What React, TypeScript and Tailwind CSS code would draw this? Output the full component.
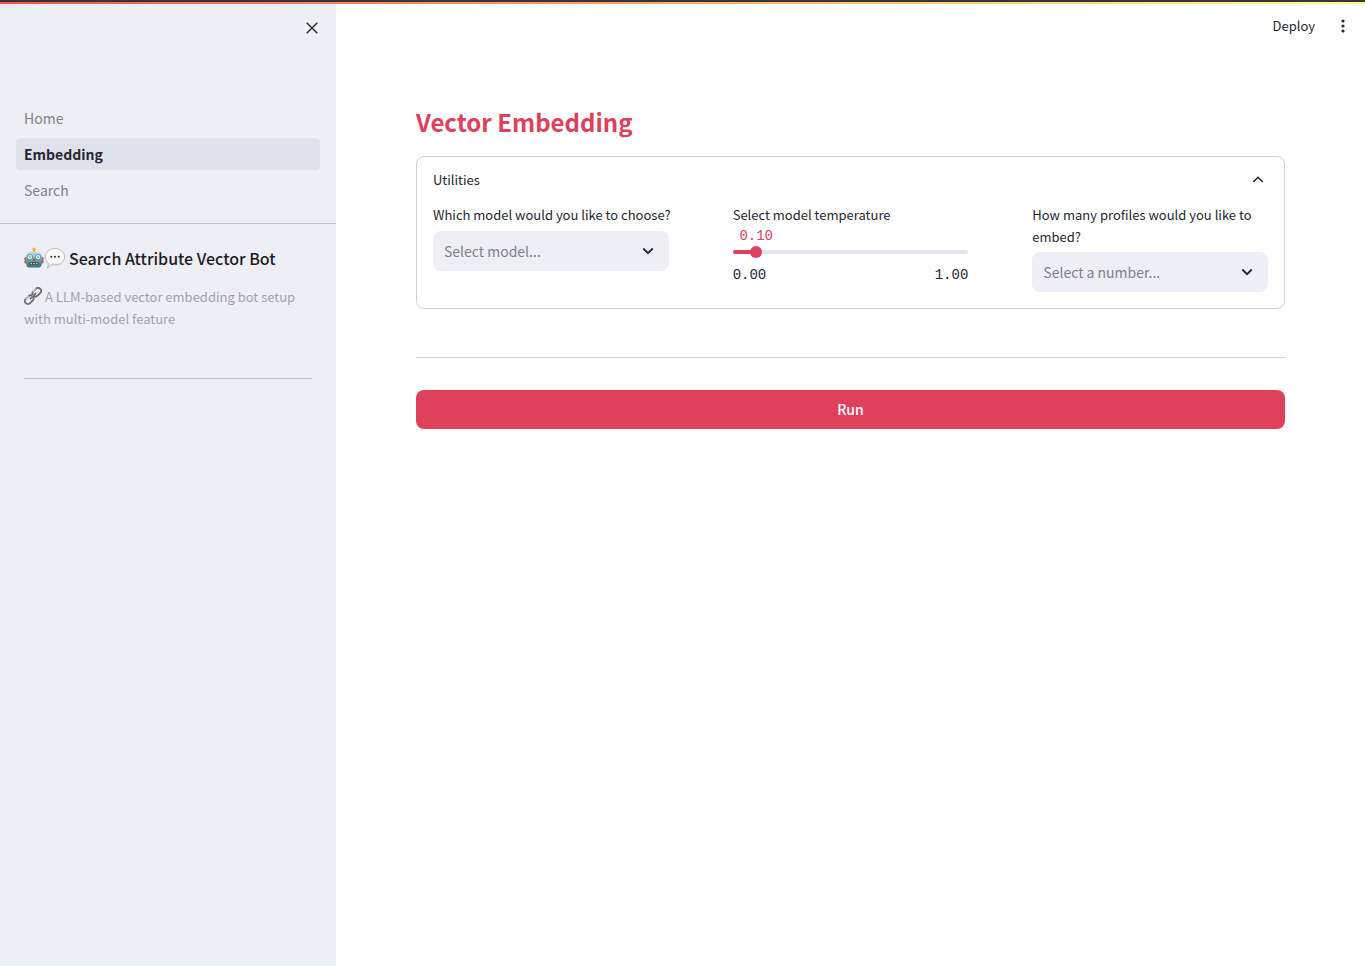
import { useState, type ReactNode } from "react";

const FONT = "font-['Noto_Sans_CJK_SC','Open_Sans',sans-serif]";

function RobotIcon() {
  return (
    <svg viewBox="0 0 20 22" className="h-[22px] w-5 shrink-0" aria-hidden="true">
      <defs>
        <linearGradient id="robot-face" x1="0" y1="0" x2="0" y2="1">
          <stop offset="0" stopColor="#d3e2e4" />
          <stop offset="0.45" stopColor="#7fabb2" />
          <stop offset="1" stopColor="#386f7a" />
        </linearGradient>
      </defs>
      <rect x="9" y="2" width="2" height="3" fill="#a83c33" />
      <circle cx="10" cy="2.2" r="1.7" fill="#f3b63c" />
      <rect x="0.5" y="10" width="2.4" height="6.5" rx="1.2" fill="#a65b59" />
      <rect x="17.1" y="10" width="2.4" height="6.5" rx="1.2" fill="#a65b59" />
      <path d="M4.5 5.3C7 4 13 4 15.5 5.3C18 7 18.5 11 18.1 15C17.8 18.8 17 20.5 14.5 20.5H5.5C3 20.5 2.2 18.8 1.9 15C1.5 11 2 7 4.5 5.3Z" fill="url(#robot-face)" />
      <circle cx="6" cy="10.2" r="2.9" fill="#3f9db8" />
      <circle cx="14" cy="10.2" r="2.9" fill="#3f9db8" />
      <circle cx="6" cy="10.2" r="2.1" fill="#e2fafd" />
      <circle cx="14" cy="10.2" r="2.1" fill="#e2fafd" />
      <circle cx="6" cy="10.2" r="0.9" fill="#7d8f98" />
      <circle cx="14" cy="10.2" r="0.9" fill="#7d8f98" />
      <path d="M10 11L11.5 13.7H8.5Z" fill="#d8392f" />
      <rect x="5.2" y="15" width="9.6" height="3" rx="1.5" fill="#2d4c55" />
      <path d="M6.5 16.5H8M9.2 16.5H10.8M12 16.5H13.5" stroke="#e3cfa4" strokeWidth="1.3" />
    </svg>
  );
}

function SpeechIcon() {
  return (
    <svg viewBox="0 0 21 22" className="h-[22px] w-[21px] shrink-0" aria-hidden="true">
      <defs>
        <linearGradient id="speech-fill" x1="0" y1="0" x2="0" y2="1">
          <stop offset="0" stopColor="#ffffff" />
          <stop offset="0.7" stopColor="#f8f8f8" />
          <stop offset="1" stopColor="#cfcfcf" />
        </linearGradient>
      </defs>
      <path d="M11 1.5C16.6 1.5 20.5 5 20.5 9.8C20.5 14.600 16.6 18 11 18C9.700 18 8.500 17.900 7.500 17.600C6.500 19.500 4.800 20.800 3 21.100C4 19.800 4.400 18.300 4.200 16.300C2.300 14.700 1.300 12.500 1.300 9.800C1.300 5 5.200 1.500 11 1.500Z" fill="url(#speech-fill)" stroke="#b4b4b6" strokeWidth="0.9" />
      <circle cx="7.300" cy="9.8" r="1" fill="#333" />
      <circle cx="11" cy="9.8" r="1" fill="#333" />
      <circle cx="14.700" cy="9.8" r="1" fill="#333" />
    </svg>
  );
}

function LinkIcon() {
  return (
    <svg viewBox="0 0 18 18" className="mr-[3px] inline-block size-[18px] align-[-3px]" fill="none" aria-hidden="true">
      <g transform="rotate(-45 9 9)">
        <rect x="-1.2" y="6" width="9.7" height="6" rx="3" stroke="#6b6e73" strokeWidth="1.8" />
        <rect x="9.5" y="6" width="9.7" height="6" rx="3" stroke="#6b6e73" strokeWidth="1.8" />
        <path d="M1.5 5.9H6M12 5.9H16.5" stroke="#d5d8dc" strokeWidth="1" />
        <path d="M5.5 9H12.5" stroke="#55585d" strokeWidth="1.8" strokeLinecap="round" />
        <path d="M6 8.6H12" stroke="#d0d3d7" strokeWidth="0.8" />
      </g>
    </svg>
  );
}

function Chevron({ up = false, className = "" }: { up?: boolean; className?: string }) {
  return (
    <svg viewBox="0 0 12 12" className={`size-3 ${className}`} fill="none" stroke="#262730" strokeWidth={up ? 1.6 : 1.9} aria-hidden="true">
      <path d={up ? "M1.3 8L6 3.3L10.7 8" : "M1.3 3.5L6 8.2L10.7 3.5"} />
    </svg>
  );
}

function FieldLabel({ htmlFor, children }: { htmlFor: string; children: ReactNode }) {
  return (
    <label htmlFor={htmlFor} className="-mr-4 block min-h-[23px] text-[13px] leading-[22px] text-[#262730]">
      {children}
    </label>
  );
}

function SelectField({ id, label, placeholder, options }: { id: string; label: string; placeholder: string; options: string[] }) {
  const [value, setValue] = useState("");
  return (
    <div>
      <FieldLabel htmlFor={id}>{label}</FieldLabel>
      <div className="relative mt-1">
        <select
          id={id}
          value={value}
          onChange={(e) => setValue(e.target.value)}
          className="h-10 w-full appearance-none rounded-lg bg-[#eeeff4] pr-10 pl-[11px] text-sm text-[#808187] outline-none"
        >
          <option value="" disabled hidden>
            {placeholder}
          </option>
          {options.map((option) => (
            <option key={option}>{option}</option>
          ))}
        </select>
        <Chevron className="pointer-events-none absolute top-[14px] right-[15px]" />
      </div>
    </div>
  );
}

function TemperatureSlider() {
  const [value, setValue] = useState(0.1);
  const percent = `${value * 100}%`;
  return (
    <div>
      <FieldLabel htmlFor="temperature">Select model temperature</FieldLabel>
      <div className="relative h-[18px] font-['Liberation_Mono',monospace] text-sm leading-[18px] text-[#df405c]">
        <output htmlFor="temperature" className="absolute -translate-x-1/2" style={{ left: percent }}>
          {value.toFixed(2)}
        </output>
      </div>
      <div className="relative flex h-[14px] items-center">
        <div className="h-1 w-full overflow-hidden rounded-full bg-[#e1e5ed]">
          <div className="h-full bg-[#df405c]" style={{ width: percent }} />
        </div>
        <input
          id="temperature"
          type="range"
          min="0"
          max="1"
          step="0.01"
          value={value}
          onChange={(e) => setValue(Number(e.target.value))}
          className="absolute inset-y-0 -left-[6px] w-[calc(100%+12px)] cursor-pointer appearance-none bg-transparent [&::-webkit-slider-thumb]:size-3 [&::-webkit-slider-thumb]:appearance-none [&::-webkit-slider-thumb]:rounded-full [&::-webkit-slider-thumb]:bg-[#df405c]"
        />
      </div>
      <div className="mt-1 flex justify-between font-['Liberation_Mono',monospace] text-sm leading-6 text-[#262730]">
        <span>0.00</span>
        <span>1.00</span>
      </div>
    </div>
  );
}

const PAGES = ["Home", "Embedding", "Search"];

function Sidebar() {
  return (
    <aside className="w-[336px] shrink-0 bg-[#eeeff4]">
      <div className="flex h-[98px] justify-end px-4 pt-4">
        <button type="button" aria-label="Close sidebar" className="flex size-4 items-center justify-center">
          <svg viewBox="0 0 16 16" className="size-4" stroke="#262730" strokeWidth="1.4" aria-hidden="true">
            <path d="M2.7 2.7L13.3 13.3M13.3 2.7L2.7 13.3" />
          </svg>
        </button>
      </div>
      <nav className="flex flex-col gap-1 border-b border-[#c5c7cd] px-4 pb-[17px]">
        {PAGES.map((page) => (
          <a
            key={page}
            href={`#${page.toLowerCase()}`}
            aria-current={page === "Embedding" ? "page" : undefined}
            className={
              page === "Embedding"
                ? "rounded bg-[#dfe2eb] px-2 text-sm leading-8 font-bold text-[#262730]"
                : "rounded px-2 text-sm leading-8 text-[#808187]"
            }
          >
            {page}
          </a>
        ))}
      </nav>
      <div className="px-6 pt-[22px]">
        <h2 className="flex items-center text-base leading-6 font-medium text-[#1c1d26]">
          <RobotIcon />
          <SpeechIcon />
          <span className="ml-1">Search Attribute Vector Bot</span>
        </h2>
        <p className="mt-4 text-[13px] leading-[22px] text-[#a0a2b3]">
          <LinkIcon />A LLM-based vector embedding bot setup with multi-model feature
        </p>
        <hr className="mt-12 border-[#c5c7cd]" />
      </div>
    </aside>
  );
}

export default function App() {
  const [open, setOpen] = useState(true);
  return (
    <div className={`flex min-h-screen flex-col bg-white text-[#262730] ${FONT}`}>
      <div className="h-[2px] bg-[#37343a]" />
      <div className="h-[2px] bg-linear-to-r from-[#f5504d] to-[#fffd80]" />
      <div className="flex flex-1">
        <Sidebar />
        <div className="min-w-0 flex-1">
          <header className="flex h-11 items-center justify-end gap-5 pr-[14px]">
            <button type="button" className="text-[13px] leading-[22px]">
              Deploy
            </button>
            <button type="button" aria-label="More options" className="flex size-4 items-center justify-center">
              <svg viewBox="0 0 16 16" className="size-4" fill="#262730" aria-hidden="true">
                <circle cx="8" cy="3" r="1.6" />
                <circle cx="8" cy="8" r="1.6" />
                <circle cx="8" cy="13" r="1.6" />
              </svg>
            </button>
          </header>
          <main className="px-20 pt-14">
            <h1 className="text-2xl leading-9 font-bold text-[#df405c]">Vector Embedding</h1>
            <section className="mt-4 rounded-lg border border-[#d2d2d5] px-4 pb-4">
              <button
                type="button"
                aria-expanded={open}
                onClick={() => setOpen(!open)}
                className="flex h-[47px] w-full items-center justify-between pr-1 pb-[2px] text-[13px] leading-[22px]"
              >
                Utilities
                <Chevron up={open} />
              </button>
              {open && (
                <div className="grid grid-cols-3 gap-16">
                  <SelectField id="model" label="Which model would you like to choose?" placeholder="Select model..." options={["Model A", "Model B"]} />
                  <TemperatureSlider />
                  <SelectField id="profiles" label="How many profiles would you like to embed?" placeholder="Select a number..." options={["10", "50", "100"]} />
                </div>
              )}
            </section>
            <hr className="mt-12 border-[#d2d2d5]" />
            <button type="button" className="mt-8 h-[39px] w-full rounded-lg bg-[#df405c] pb-[2px] text-sm font-medium text-white">
              Run
            </button>
          </main>
        </div>
      </div>
    </div>
  );
}
